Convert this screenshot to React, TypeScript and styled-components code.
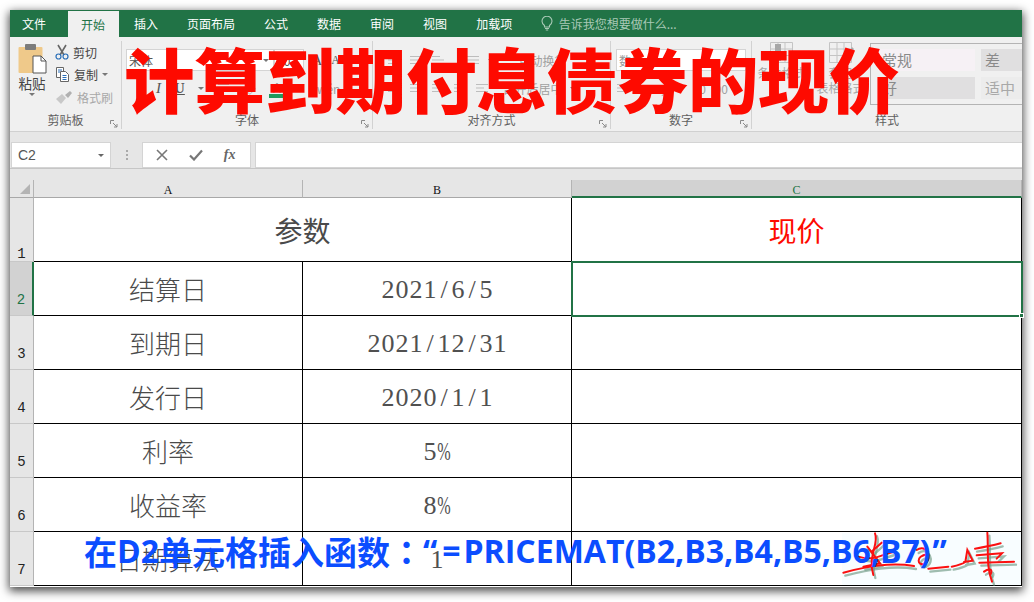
import React from "react";
import styled, { createGlobalStyle } from "styled-components";

const CJK = `"Noto Sans CJK SC", "Liberation Sans", sans-serif`;
const GREEN = "#217346";

const Global = createGlobalStyle`
  html, body { margin: 0; padding: 0; background: #fff; }
  body { width: 1034px; height: 602px; overflow: hidden; font-family: ${CJK}; }
`;

const Page = styled.div`
  width: 1034px;
  height: 602px;
  padding: 10px 12px 15px 10px;
  box-sizing: border-box;
  background: #fff;
`;

const Win = styled.div`
  position: relative;
  width: 1012px;
  height: 577px;
  display: flex;
  flex-direction: column;
  background: #e6e6e6;
  box-shadow: 0 3px 9px 1px rgba(0, 0, 0, 0.72);
`;

const TabBar = styled.div`
  height: 27px;
  flex: none;
  display: flex;
  align-items: stretch;
  background: ${GREEN};
  font-size: 12px;
  color: #fff;
`;

const Tab = styled.div<{ $active?: boolean; $l: number; $r: number }>`
  display: flex;
  align-items: center;
  padding: 0 ${(p) => p.$r}px 0 ${(p) => p.$l}px;
  margin-top: ${(p) => (p.$active ? 1 : 0)}px;
  background: ${(p) => (p.$active ? "#f0f0f0" : "transparent")};
  color: ${(p) => (p.$active ? GREEN : "#fff")};
`;

const TellMe = styled.div`
  display: flex;
  align-items: center;
  gap: 6px;
  margin-left: 14px;
  color: #a9c9b6;
  font-size: 12px;
`;

const Ribbon = styled.div`
  height: 94px;
  flex: none;
  display: flex;
  background: #f0f0f0;
  border-bottom: 1px solid #d0d0d0;
  box-sizing: content-box;
`;

const Group = styled.div<{ $w?: number }>`
  position: relative;
  ${(p) => (p.$w ? `width: ${p.$w}px; flex: none;` : "flex: 1; min-width: 0;")}
  display: flex;
  flex-direction: column;
  margin: 4px 0 2px;
  border-right: ${(p) => (p.$w ? "1px solid #d2d2d2" : "none")};
  box-sizing: border-box;
`;

const GroupBody = styled.div<{ $pad?: string }>`
  flex: 1;
  min-height: 0;
  padding: ${(p) => p.$pad ?? "0"};
`;

const GroupLabel = styled.div`
  height: 18px;
  text-align: center;
  font-size: 12px;
  line-height: 18px;
  color: #606060;
`;

const Launcher = styled.svg`
  position: absolute;
  right: 3px;
  bottom: 1px;
`;

const Clip = styled.div`
  display: flex;
  padding: 2px 0 0 7px;
  gap: 8px;
`;

const PasteCol = styled.div`
  width: 30px;
  display: flex;
  flex-direction: column;
  align-items: center;
  font-size: 13.5px;
  color: #444;
  line-height: 17px;
  gap: 1px;
`;

const ClipList = styled.div`
  display: flex;
  flex-direction: column;
  margin-top: -2px;
`;

const ClipItem = styled.div<{ $muted?: boolean }>`
  height: 22.5px;
  display: flex;
  align-items: center;
  gap: 4px;
  font-size: 12px;
  color: ${(p) => (p.$muted ? "#a8a8a8" : "#444")};
`;

const Caret = styled.span<{ $c?: string }>`
  display: inline-block;
  width: 0;
  height: 0;
  border-left: 3px solid transparent;
  border-right: 3px solid transparent;
  border-top: 3px solid ${(p) => p.$c ?? "#777"};
`;

const RibbonRow = styled.div<{ $gap?: number; $pad?: number; $h?: number }>`
  display: flex;
  align-items: center;
  height: ${(p) => p.$h ?? 24}px;
  gap: ${(p) => p.$gap ?? 6}px;
  padding-left: ${(p) => p.$pad ?? 0}px;
  color: #666;
  font-size: 12px;
`;

const Combo = styled.div<{ $w: number; $color?: string }>`
  width: ${(p) => p.$w}px;
  height: 22px;
  box-sizing: border-box;
  background: #fff;
  border: 1px solid #d4d4d4;
  display: flex;
  align-items: center;
  justify-content: space-between;
  padding: 0 4px 0 2px;
  font-size: 12px;
  color: ${(p) => p.$color ?? "#555"};
`;

const FontLetter = styled.span<{ $size: number; $italic?: boolean; $under?: boolean; $bold?: boolean }>`
  font-family: "Liberation Serif", serif;
  font-size: ${(p) => p.$size}px;
  font-style: ${(p) => (p.$italic ? "italic" : "normal")};
  font-weight: ${(p) => (p.$bold ? 700 : 400)};
  text-decoration: ${(p) => (p.$under ? "underline" : "none")};
  color: #555;
`;

const ColorBtn = styled.div`
  position: relative;
  width: 16px;
  height: 20px;
  text-align: center;
  font-size: 13px;
  color: #999;
  &::after {
    content: "";
    position: absolute;
    left: 0;
    bottom: 0;
    width: 15px;
    height: 4px;
    background: #1f9a5c;
  }
`;

const Faded = styled.span`
  color: #a0a0a0;
  font-size: 12px;
`;

const Styles = styled.div`
  display: flex;
  height: 100%;
`;

const BigBtn = styled.div`
  width: 60px;
  display: flex;
  flex-direction: column;
  align-items: center;
  color: #a8a8a8;
  font-size: 12px;
  line-height: 15px;
  text-align: center;
`;

const Gallery = styled.div`
  flex: 1;
  height: 62px;
  margin-top: 2px;
  box-sizing: border-box;
  border: 1px solid #b4b4b4;
  border-right: none;
  padding: 5px 0 0 7px;
  display: grid;
  grid-template-columns: 97px 41px;
  grid-auto-rows: 22px;
  column-gap: 6px;
  row-gap: 6px;
`;

const StyleCell = styled.div<{ $bg: string; $c?: string }>`
  background: ${(p) => p.$bg};
  color: ${(p) => p.$c ?? "#8a8a8a"};
  font-size: 15px;
  line-height: 22px;
  padding-left: 4px;
  white-space: nowrap;
  overflow: hidden;
`;

const FormulaBar = styled.div`
  height: 37px;
  flex: none;
  display: flex;
  align-items: flex-end;
  background: #e6e6e6;
  border-bottom: 1px solid #c6c6c6;
  box-sizing: border-box;
`;

const NameBox = styled.div`
  width: 100px;
  height: 26px;
  margin-left: 1px;
  box-sizing: border-box;
  background: #fff;
  border: 1px solid #d4d4d4;
  display: flex;
  align-items: center;
  justify-content: space-between;
  padding: 0 6px;
  font-family: "Liberation Sans", sans-serif;
  font-size: 14px;
  color: #555;
`;

const Dots = styled.div`
  width: 31px;
  height: 26px;
  display: flex;
  flex-direction: column;
  align-items: center;
  justify-content: center;
  gap: 2px;
  & i { width: 2px; height: 2px; background: #aaa; display: block; }
`;

const FxBox = styled.div`
  width: 109px;
  height: 26px;
  box-sizing: border-box;
  background: #fff;
  border: 1px solid #d4d4d4;
  display: flex;
  align-items: center;
  justify-content: space-around;
  padding: 0 4px 0 2px;
`;

const FxGlyph = styled.span`
  font-family: "Liberation Serif", serif;
  font-style: italic;
  font-weight: 700;
  font-size: 14px;
  color: #666;
`;

const FormulaInput = styled.div`
  flex: 1;
  height: 26px;
  margin-left: 4px;
  box-sizing: border-box;
  background: #fff;
  border: 1px solid #d4d4d4;
  border-right: none;
`;

const Band = styled.div`
  height: 11px;
  flex: none;
  background: #e6e6e6;
`;

const Sheet = styled.div`
  flex: 1;
  min-height: 0;
  display: grid;
  grid-template-columns: 24px 269px 269px 450px;
  grid-template-rows: 18px 64px repeat(6, 54px) 1fr;
  background: #fff;
`;

const Corner = styled.div`
  background: #e6e6e6;
  border-right: 1px solid #b4b4b4;
  border-bottom: 1px solid #a8a8a8;
  box-sizing: border-box;
  display: flex;
  align-items: flex-end;
  justify-content: flex-end;
  padding: 0 3px 3px 0;
`;

const ColHead = styled.div<{ $sel?: boolean }>`
  box-sizing: border-box;
  background: ${(p) => (p.$sel ? "#d2d2d2" : "#e6e6e6")};
  color: ${(p) => (p.$sel ? GREEN : "#111")};
  border-right: 1px solid #b4b4b4;
  border-bottom: ${(p) => (p.$sel ? `2px solid ${GREEN}` : "1px solid #a8a8a8")};
  font-family: "Liberation Serif", serif;
  font-size: 12px;
  line-height: 20px;
  text-align: center;
`;

const RowHead = styled.div<{ $sel?: boolean; $lift?: number }>`
  box-sizing: border-box;
  background: ${(p) => (p.$sel ? "#d2d2d2" : "#e6e6e6")};
  color: ${(p) => (p.$sel ? GREEN : "#222")};
  border-right: ${(p) => (p.$sel ? `2px solid ${GREEN}` : "1px solid #b4b4b4")};
  border-bottom: 1px solid #c8c8c8;
  padding-bottom: ${(p) => p.$lift ?? 0}px;
  display: flex;
  align-items: flex-end;
  justify-content: center;
  font-family: "Liberation Mono", monospace;
  font-size: 14px;
  line-height: 14px;
`;

const Cell = styled.div<{ $span?: number; $c?: string; $size?: number; $weight?: number; $selected?: boolean; $drop?: number }>`
  position: relative;
  grid-column: span ${(p) => p.$span ?? 1};
  box-sizing: border-box;
  border-right: 1px solid ${(p) => (p.$selected ? GREEN : "#000")};
  border-bottom: 1px solid ${(p) => (p.$selected ? GREEN : "#000")};
  padding-top: ${(p) => p.$drop ?? 0}px;
  display: flex;
  align-items: center;
  justify-content: center;
  background: #fff;
  color: ${(p) => p.$c ?? "#4a4a4a"};
  font-size: ${(p) => p.$size ?? 26}px;
  font-weight: ${(p) => p.$weight ?? 300};
  ${(p) => (p.$selected ? `box-shadow: 0 0 0 1px ${GREEN}, inset 1px 1px 0 0 ${GREEN}; z-index: 1;` : "")}
  ${(p) =>
    p.$selected
      ? `&::after { content: ""; position: absolute; right: -3px; bottom: -3px; width: 5px; height: 5px; background: ${GREEN}; border: 1px solid #fff; box-sizing: border-box; }`
      : ""}
`;

const Ch = styled.span<{ $narrow?: boolean }>`
  width: 14px;
  display: inline-flex;
  justify-content: center;
  font-family: "Liberation Serif", serif;
  font-size: 26px;
  color: #505050;
  ${(p) => (p.$narrow ? "transform: scaleX(0.62);" : "")}
`;

const Foot = styled.div`
  grid-column: 1 / -1;
  background: #fff;
`;

const Title = styled.div`
  position: absolute;
  left: 114px;
  top: 21px;
  z-index: 5;
  font-size: 70.5px;
  line-height: 92px;
  font-weight: 900;
  color: #fe0a00;
  white-space: nowrap;
`;

const Caption = styled.div`
  position: absolute;
  left: 74px;
  top: 518px;
  z-index: 7;
  display: flex;
  align-items: center;
  font-size: 33px;
  line-height: 46px;
  font-weight: 700;
  color: #0b4dff;
  white-space: nowrap;
`;

const Latin = styled.span<{ $ml?: number; $mr?: number }>`
  font-family: "Open Sans", "Liberation Sans", sans-serif;
  font-size: 32px;
  font-weight: 700;
  margin-left: ${(p) => p.$ml ?? 0}px;
  margin-right: ${(p) => p.$mr ?? 0}px;
`;

const Colon = styled.span`
  font-family: "Noto Sans CJK TC", sans-serif;
`;

const Signature = styled.svg`
  position: absolute;
  left: 770px;
  top: 490px;
  z-index: 6;
`;

const SigBack = styled.div`
  position: absolute;
  left: 832px;
  top: 523px;
  width: 179px;
  height: 52px;
  background: #f8fdff;
  z-index: 2;
`;

const PasteIcon = () => (
  <svg width="29" height="31" viewBox="0 0 29 31">
    <rect x="0.5" y="4" width="24" height="26" rx="1" fill="#efc98a" />
    <rect x="7" y="1" width="11" height="6" rx="1" fill="#7b7b7b" />
    <path d="M15 13h8l5 5v12H15z" fill="#fff" stroke="#555" />
    <path d="M23 13v5h5" fill="none" stroke="#555" />
  </svg>
);

const CutIcon = () => (
  <svg width="14" height="16" viewBox="0 0 14 16" fill="none">
    <path d="M3 1l6 10M11 1L5 11" stroke="#666" strokeWidth="1.6" />
    <circle cx="3.5" cy="12.5" r="2.5" stroke="#2a6fb8" strokeWidth="1.2" />
    <circle cx="10.5" cy="12.5" r="2.5" stroke="#2a6fb8" strokeWidth="1.2" />
  </svg>
);

const CopyIcon = () => (
  <svg width="15" height="15" viewBox="0 0 15 15" fill="#fff" stroke="#666">
    <path d="M1.5.5h7v10h-7z" />
    <path d="M5.5 4.5h5l3 3v7h-8z" />
    <path d="M3 3h4M3 5h2M7.5 8.5h4M7.5 10.5h4M7.5 12.5h4" stroke="#2a6fb8" fill="none" />
  </svg>
);

const BrushIcon = () => (
  <svg width="18" height="14" viewBox="0 0 18 14">
    <path d="M1 9l6-5 4 4-5 6z" fill="#c8c8c8" />
    <path d="M10 5l5-4 2 2-4 5z" fill="#b0b0b0" />
  </svg>
);

const LauncherIcon = () => (
  <Launcher width="8" height="8" viewBox="0 0 8 8" fill="none" stroke="#8a8a8a">
    <path d="M.5 4V.5H4" />
    <path d="M3 3l4 4M7 4v3H4" />
  </Launcher>
);

const Lines = ({ w = [12, 8, 12] }: { w?: number[] }) => (
  <svg width="14" height="12" viewBox="0 0 14 12" stroke="#bdbdbd">
    {w.map((l, i) => (
      <path key={i} d={`M1 ${2.5 + i * 3.5}h${l}`} />
    ))}
  </svg>
);

const Bulb = () => (
  <svg width="12" height="15" viewBox="0 0 12 15" fill="none" stroke="#a9c9b6" strokeWidth="1.1">
    <path d="M3.5 9.5C2 8.3 1 7 1 5.2A5 5 0 0 1 11 5.2c0 1.8-1 3.1-2.5 4.3v1.5h-5z" />
    <path d="M4 12.5h4M4.8 14h2.4" />
  </svg>
);

const Cross = () => (
  <svg width="12" height="12" viewBox="0 0 12 12" stroke="#777" strokeWidth="1.6" fill="none">
    <path d="M1 1l10 10M11 1L1 11" />
  </svg>
);

const Check = () => (
  <svg width="14" height="12" viewBox="0 0 14 12" stroke="#777" strokeWidth="2.2" fill="none">
    <path d="M1 6.5l4 4L13 1.5" />
  </svg>
);

const CornerMark = () => (
  <svg width="10" height="10" viewBox="0 0 10 10">
    <path d="M10 0v10H0z" fill="#b4b4b4" />
  </svg>
);

const TableIcon = ({ brush }: { brush?: boolean }) => (
  <svg width="26" height="24" viewBox="0 0 26 24" fill="none" stroke="#c4c4c4">
    <path d="M1.5 1.5h22v20h-22zM1.5 8h22M1.5 14.5h22M9 1.5v20M16 1.5v20" />
    {brush ? <path d="M14 22l10-16 2 2-8 16z" fill="#aaa" stroke="none" /> : <path d="M6 3h6v17H6z" fill="#a8a8a8" stroke="none" />}
  </svg>
);

const sigStrokes = [
  "M190 218 C260 200 330 186 402 198",
  "M285 100 C298 130 262 170 280 225",
  "M235 170 C280 184 300 166 338 156",
  "M305 128 L276 154",
  "M262 140 L300 190 L250 200",
  "M410 150 C440 128 462 178 432 192 C414 198 404 170 442 163",
  "M445 206 L505 200",
  "M515 200 C535 196 548 192 556 186 L562 150 L578 182 L552 186",
  "M622 98 C626 150 618 200 636 245",
  "M585 146 C610 142 640 136 662 130",
  "M590 166 L666 160 L650 176",
  "M598 188 L702 185",
  "M612 215 C625 205 640 205 632 222",
];

const rows = [
  { n: 2, a: "结算日", b: "2021/6/5", sel: true },
  { n: 3, a: "到期日", b: "2021/12/31" },
  { n: 4, a: "发行日", b: "2020/1/1" },
  { n: 5, a: "利率", b: "5%" },
  { n: 6, a: "收益率", b: "8%" },
  { n: 7, a: "日期算法", b: "1" },
];

export default function App() {
  return (
    <>
      <Global />
      <Page>
        <Win>
          <TabBar>
            <Tab $l={12} $r={22}>文件</Tab>
            <Tab $l={13} $r={14} $active>开始</Tab>
            <Tab $l={15} $r={14.5}>插入</Tab>
            <Tab $l={14.5} $r={14.5}>页面布局</Tab>
            <Tab $l={14.5} $r={14.5}>公式</Tab>
            <Tab $l={14.5} $r={14.5}>数据</Tab>
            <Tab $l={14.5} $r={14.5}>审阅</Tab>
            <Tab $l={14.5} $r={14.5}>视图</Tab>
            <Tab $l={14.5} $r={14.5}>加载项</Tab>
            <TellMe><Bulb />告诉我您想要做什么...</TellMe>
          </TabBar>

          <Ribbon>
            <Group $w={112}>
              <GroupBody>
                <Clip>
                  <PasteCol>
                    <PasteIcon />
                    <span>粘贴</span>
                    <Caret />
                  </PasteCol>
                  <ClipList>
                    <ClipItem><CutIcon />剪切</ClipItem>
                    <ClipItem><CopyIcon />复制<Caret /></ClipItem>
                    <ClipItem $muted><BrushIcon />格式刷</ClipItem>
                  </ClipList>
                </Clip>
              </GroupBody>
              <GroupLabel>剪贴板</GroupLabel>
              <LauncherIcon />
            </Group>

            <Group $w={251}>
              <GroupBody $pad="7px 0 0 4px">
                <RibbonRow $gap={0}>
                  <Combo $w={148}>宋体<Caret /></Combo>
                  <Combo $w={30}>20<Caret /></Combo>
                  <FontLetter $size={15}>&nbsp;&nbsp;A</FontLetter>
                  <FontLetter $size={12}>&nbsp;&nbsp;&nbsp;A</FontLetter>
                </RibbonRow>
                <RibbonRow $gap={13} $pad={30} $h={32}>
                  <FontLetter $size={15} $italic>I</FontLetter>
                  <FontLetter $size={15} $under $bold>U</FontLetter>
                  <Caret />
                  <Lines w={[11, 11, 11]} />
                  <Faded>◇</Faded>
                  <ColorBtn>A</ColorBtn>
                  <Caret />
                  <Faded>wén</Faded>
                </RibbonRow>
              </GroupBody>
              <GroupLabel>字体</GroupLabel>
              <LauncherIcon />
            </Group>

            <Group $w={238}>
              <GroupBody $pad="7px 0 0 14px">
                <RibbonRow $gap={8}>
                  <Lines /><Lines /><Lines w={[8, 12, 8]} />
                  <Faded>&nbsp;&nbsp;</Faded>
                  <Lines w={[12, 12, 12]} /><Caret />
                  <Faded>&nbsp;&nbsp;&nbsp;&nbsp;&nbsp;&nbsp;自动换行</Faded>
                </RibbonRow>
                <RibbonRow $gap={8} $h={32}>
                  <Lines /><Lines w={[12, 12, 12]} /><Lines w={[8, 12, 8]} />
                  <Lines /><Lines />
                  <Faded>&nbsp;&nbsp;合并后居中</Faded><Caret />
                </RibbonRow>
              </GroupBody>
              <GroupLabel>对齐方式</GroupLabel>
              <LauncherIcon />
            </Group>

            <Group $w={141}>
              <GroupBody $pad="7px 0 0 5px">
                <RibbonRow>
                  <Combo $w={130} $color="#999">数值<Caret /></Combo>
                </RibbonRow>
                <RibbonRow $gap={10} $h={32}>
                  <Lines /><Faded>%</Faded><Faded>,</Faded>
                  <Faded>&nbsp;&nbsp;&nbsp;&nbsp;&nbsp;&nbsp;&nbsp;&nbsp;.0&nbsp;&nbsp;.00</Faded>
                </RibbonRow>
              </GroupBody>
              <GroupLabel>数字</GroupLabel>
              <LauncherIcon />
            </Group>

            <Group>
              <GroupBody>
                <Styles>
                  <BigBtn>
                    <TableIcon />
                    <span>条件格式</span>
                  </BigBtn>
                  <BigBtn>
                    <TableIcon brush />
                    <span>套用<br />表格格式</span>
                  </BigBtn>
                  <Gallery>
                    <StyleCell $bg="#f6f1f5">常规</StyleCell>
                    <StyleCell $bg="#e0dfe0">差</StyleCell>
                    <StyleCell $bg="#e0dfe0">好</StyleCell>
                    <StyleCell $bg="#ececec" $c="#a8a8a8">适中</StyleCell>
                  </Gallery>
                </Styles>
              </GroupBody>
              <GroupLabel>样式</GroupLabel>
            </Group>
          </Ribbon>

          <FormulaBar>
            <NameBox>C2<Caret $c="#666" /></NameBox>
            <Dots><i /><i /><i /></Dots>
            <FxBox>
              <Cross />
              <Check />
              <FxGlyph>fx</FxGlyph>
            </FxBox>
            <FormulaInput />
          </FormulaBar>

          <Band />

          <Sheet>
            <Corner><CornerMark /></Corner>
            <ColHead>A</ColHead>
            <ColHead>B</ColHead>
            <ColHead $sel>C</ColHead>

            <RowHead>1</RowHead>
            <Cell $span={2} $size={28} $weight={400}>参数</Cell>
            <Cell $size={28} $weight={400} $c="#fe0a00">现价</Cell>

            {rows.map((r) => (
              <React.Fragment key={r.n}>
                <RowHead $sel={r.sel} $lift={8}>{r.n}</RowHead>
                <Cell>{r.a}</Cell>
                <Cell $drop={3}>
                  {r.b.split("").map((c, i) => (
                    <Ch key={i} $narrow={c === "%"}>{c}</Ch>
                  ))}
                </Cell>
                <Cell $selected={r.sel} />
              </React.Fragment>
            ))}
            <Foot />
          </Sheet>

          <Title>计算到期付息债券的现价</Title>
          <SigBack />
          <Signature width="254" height="102" viewBox="0 0 762 306" fill="none" strokeLinecap="round">
            <g stroke="#6f9a84" strokeOpacity="0.65" strokeWidth="7" transform="translate(6 9)">
              {sigStrokes.map((d) => <path key={d} d={d} />)}
            </g>
            <g stroke="#fb1010" strokeWidth="6">
              {sigStrokes.map((d) => <path key={d} d={d} />)}
            </g>
          </Signature>
          <Caption>
            在<Latin>D2</Latin>单元格插入函数<Colon>：</Colon>
            <Latin $mr={5}>“</Latin>
            <Latin $mr={3}>=</Latin>
            <Latin>PRICEMAT(B2,B3,B4,B5,B6,B7)</Latin>
            <Latin $ml={2}>”</Latin>
          </Caption>
        </Win>
      </Page>
    </>
  );
}
